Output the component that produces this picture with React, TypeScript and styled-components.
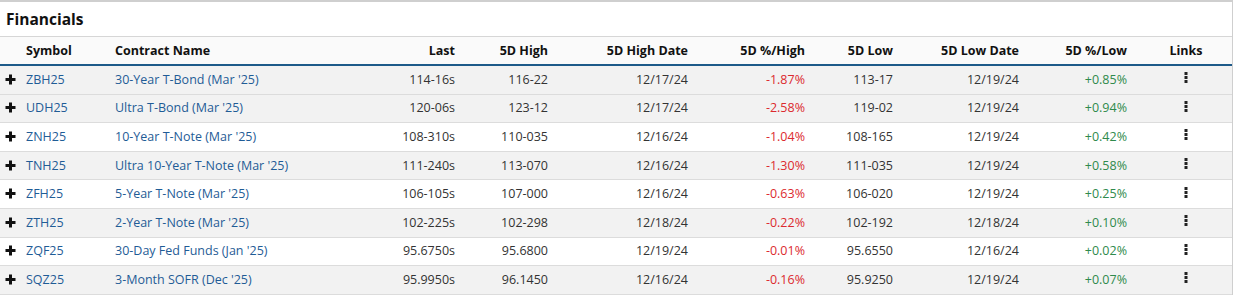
import React from "react";
import styled, { createGlobalStyle } from "styled-components";

const GlobalStyle = createGlobalStyle`
  body {
    margin: 0;
    background: #fff;
    font-family: "Open Sans", "Liberation Sans", sans-serif;
    color: #333;
  }
`;

const COLUMNS =
  "20px 89px 261px 91px 93px 140px 117px 88px 126px 115px 92px";

const Panel = styled.div`
  width: 1232px;
  border-top: 2px solid #cfcfcf;
  border-right: 1px solid #cfcfcf;
  box-sizing: content-box;
`;

const Title = styled.h2`
  margin: 0;
  height: 34px;
  display: flex;
  align-items: center;
  padding: 0 6px;
  font-size: 15.5px;
  font-weight: 700;
  color: #111;
  border-bottom: 1px solid #d6d6d6;
`;

const HeaderRow = styled.div`
  display: grid;
  grid-template-columns: ${COLUMNS};
  height: 29px;
  box-sizing: border-box;
  align-items: center;
  background: #fafafa;
  border-bottom: 2px solid #1d5a89;
  font-size: 12.5px;
  font-weight: 700;
  color: #111;
`;

const Row = styled.div<{ $shaded: boolean }>`
  display: grid;
  grid-template-columns: ${COLUMNS};
  height: 28.6px;
  box-sizing: border-box;
  align-items: center;
  background: ${({ $shaded }) => ($shaded ? "#f2f2f2" : "#fff")};
  border-bottom: 1px solid #dcdcdc;
  font-size: 12.5px;
  padding-bottom: 1px;
`;

const Cell = styled.div<{
  $align?: "left" | "right" | "center";
  $pad?: number;
  $tone?: "link" | "down" | "up";
}>`
  text-align: ${({ $align }) => $align || "right"};
  padding: ${({ $align, $pad }) =>
    $align === "left" ? "0 0 0 6px" : $align === "center" ? "0" : `0 ${$pad ?? 6}px 0 0`};
  white-space: nowrap;
  color: ${({ $tone }) =>
    $tone === "link"
      ? "#1f5c96"
      : $tone === "down"
      ? "#dc2a2f"
      : $tone === "up"
      ? "#2f8a4c"
      : "inherit"};
`;

const IconCell = styled.div`
  display: flex;
  align-items: center;
  justify-content: flex-start;
  padding-left: 5px;
`;

const LinksCell = styled.div`
  display: flex;
  justify-content: center;
  align-items: center;
  padding-bottom: 3px;
`;

const Plus = () => (
  <svg width="11" height="11" viewBox="0 0 11 11">
    <rect x="4" y="0.5" width="3" height="10" fill="#111" />
    <rect x="0.5" y="4" width="10" height="3" fill="#111" />
  </svg>
);

const Dots = () => (
  <svg width="4" height="11" viewBox="0 0 4 11">
    <rect x="0.5" y="0" width="3" height="3" fill="#222" />
    <rect x="0.5" y="4" width="3" height="3" fill="#222" />
    <rect x="0.5" y="8" width="3" height="3" fill="#222" />
  </svg>
);

type Quote = {
  symbol: string;
  name: string;
  last: string;
  high: string;
  highDate: string;
  pctHigh: string;
  low: string;
  lowDate: string;
  pctLow: string;
};

const quotes: Quote[] = [
  { symbol: "ZBH25", name: "30-Year T-Bond (Mar '25)", last: "114-16s", high: "116-22", highDate: "12/17/24", pctHigh: "-1.87%", low: "113-17", lowDate: "12/19/24", pctLow: "+0.85%" },
  { symbol: "UDH25", name: "Ultra T-Bond (Mar '25)", last: "120-06s", high: "123-12", highDate: "12/17/24", pctHigh: "-2.58%", low: "119-02", lowDate: "12/19/24", pctLow: "+0.94%" },
  { symbol: "ZNH25", name: "10-Year T-Note (Mar '25)", last: "108-310s", high: "110-035", highDate: "12/16/24", pctHigh: "-1.04%", low: "108-165", lowDate: "12/19/24", pctLow: "+0.42%" },
  { symbol: "TNH25", name: "Ultra 10-Year T-Note (Mar '25)", last: "111-240s", high: "113-070", highDate: "12/16/24", pctHigh: "-1.30%", low: "111-035", lowDate: "12/19/24", pctLow: "+0.58%" },
  { symbol: "ZFH25", name: "5-Year T-Note (Mar '25)", last: "106-105s", high: "107-000", highDate: "12/16/24", pctHigh: "-0.63%", low: "106-020", lowDate: "12/19/24", pctLow: "+0.25%" },
  { symbol: "ZTH25", name: "2-Year T-Note (Mar '25)", last: "102-225s", high: "102-298", highDate: "12/18/24", pctHigh: "-0.22%", low: "102-192", lowDate: "12/18/24", pctLow: "+0.10%" },
  { symbol: "ZQF25", name: "30-Day Fed Funds (Jan '25)", last: "95.6750s", high: "95.6800", highDate: "12/19/24", pctHigh: "-0.01%", low: "95.6550", lowDate: "12/16/24", pctLow: "+0.02%" },
  { symbol: "SQZ25", name: "3-Month SOFR (Dec '25)", last: "95.9950s", high: "96.1450", highDate: "12/16/24", pctHigh: "-0.16%", low: "95.9250", lowDate: "12/19/24", pctLow: "+0.07%" },
];

// row 2 sits under the pointer in the capture, so it is shaded too
const shaded = [true, true, false, true, false, true, false, true];

export default function App() {
  return (
    <>
      <GlobalStyle />
      <Panel>
        <Title>Financials</Title>
        <HeaderRow>
          <div />
          <Cell $align="left">Symbol</Cell>
          <Cell $align="left">Contract Name</Cell>
          <Cell>Last</Cell>
          <Cell>5D High</Cell>
          <Cell>5D High Date</Cell>
          <Cell>5D %/High</Cell>
          <Cell>5D Low</Cell>
          <Cell>5D Low Date</Cell>
          <Cell $pad={13}>5D %/Low</Cell>
          <Cell $align="center">Links</Cell>
        </HeaderRow>
        {quotes.map((q, i) => (
          <Row key={q.symbol} $shaded={shaded[i]}>
            <IconCell>
              <Plus />
            </IconCell>
            <Cell $align="left" $tone="link">{q.symbol}</Cell>
            <Cell $align="left" $tone="link">{q.name}</Cell>
            <Cell>{q.last}</Cell>
            <Cell>{q.high}</Cell>
            <Cell>{q.highDate}</Cell>
            <Cell $tone="down">{q.pctHigh}</Cell>
            <Cell>{q.low}</Cell>
            <Cell>{q.lowDate}</Cell>
            <Cell $pad={13} $tone="up">{q.pctLow}</Cell>
            <LinksCell>
              <Dots />
            </LinksCell>
          </Row>
        ))}
      </Panel>
    </>
  );
}
